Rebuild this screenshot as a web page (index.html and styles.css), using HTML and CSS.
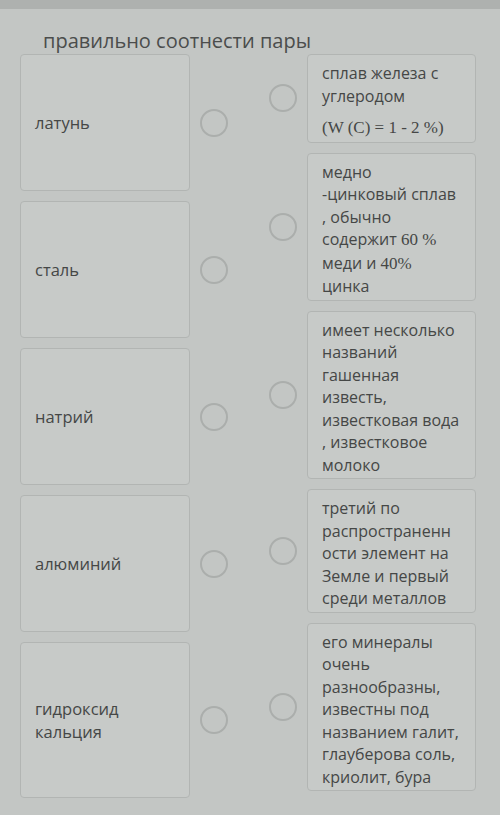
FILE: index.html
```html
<!DOCTYPE html>
<html lang="ru">
<head>
    <meta charset="UTF-8">
    <meta name="viewport" content="width=device-width, initial-scale=1.0">
    <title>Соотнести пары</title>
    <link rel="stylesheet" href="styles.css">
</head>
<body>
    <div class="topbar"></div>

    <h2 class="question">правильно соотнести пары</h2>

    <div class="match">
        <div class="column">
            <div class="item">
                <div class="card left">латунь</div>
                <span class="dot"></span>
            </div>
            <div class="item">
                <div class="card left">сталь</div>
                <span class="dot"></span>
            </div>
            <div class="item">
                <div class="card left">натрий</div>
                <span class="dot"></span>
            </div>
            <div class="item">
                <div class="card left">алюминий</div>
                <span class="dot"></span>
            </div>
            <div class="item">
                <div class="card left tall">гидроксид<br>кальция</div>
                <span class="dot"></span>
            </div>
        </div>

        <div class="column right-col">
            <div class="item">
                <span class="dot"></span>
                <div class="card right">
                    <p>сплав железа с<br>углеродом</p>
                    <p><span class="num">(W (C) = 1 - 2 %)</span></p>
                </div>
            </div>
            <div class="item">
                <span class="dot"></span>
                <div class="card right">
                    <p>медно<br>-цинковый сплав<br>, обычно<br>содержит <span class="num">60 %</span><br>меди и <span class="num">40%</span><br>цинка</p>
                </div>
            </div>
            <div class="item">
                <span class="dot"></span>
                <div class="card right">
                    <p>имеет несколько<br>названий<br>гашенная<br>известь,<br>известковая вода<br>, известковое<br>молоко</p>
                </div>
            </div>
            <div class="item">
                <span class="dot"></span>
                <div class="card right">
                    <p>третий по<br>распространенн<br>ости элемент на<br>Земле и первый<br>среди металлов</p>
                </div>
            </div>
            <div class="item">
                <span class="dot"></span>
                <div class="card right">
                    <p>его минералы<br>очень<br>разнообразны,<br>известны под<br>названием галит,<br>глауберова соль,<br>криолит, бура</p>
                </div>
            </div>
        </div>
    </div>
</body>
</html>
```

FILE: styles.css
```css
body {
    font-family: "Open Sans", "Noto Sans", sans-serif;
    background-color: #c3c6c4;
    color: #454746;
    margin: 0;
    padding: 0;
}
.topbar {
    height: 9px;
    background-color: #aeb1af;
}
.question {
    font-size: 20px;
    font-weight: normal;
    color: #4b4d4c;
    margin: 0;
    padding: 19px 0 0 43px;
    line-height: 26px;
}
.match {
    display: flex;
    gap: 41px;
    padding: 0 24px 0 20px;
}
.column {
    display: flex;
    flex-direction: column;
    gap: 10px;
}
.right-col {
    flex: 1;
}
.item {
    display: flex;
    align-items: center;
    gap: 10px;
}
.card {
    background-color: #c7cac8;
    border: 1px solid #b2b5b3;
    border-radius: 4px;
    box-sizing: border-box;
}
.card.left {
    width: 170px;
    height: 137px;
    padding: 0 14px;
    display: flex;
    align-items: center;
    font-size: 16.5px;
    line-height: 23px;
}
.card.left.tall {
    height: 156px;
}
.card.right {
    flex: 1;
    padding: 7px 10px 2px 14px;
    font-size: 16px;
    line-height: 22.5px;
    white-space: nowrap;
}
.card.right p {
    margin: 0;
}
.card.right p + p {
    margin-top: 9px;
}
.num {
    font-family: "Liberation Serif", serif;
    font-size: 17px;
}
.dot {
    width: 28px;
    height: 28px;
    border: 2px solid #abaeac;
    border-radius: 50%;
    box-sizing: border-box;
    flex-shrink: 0;
}
```
